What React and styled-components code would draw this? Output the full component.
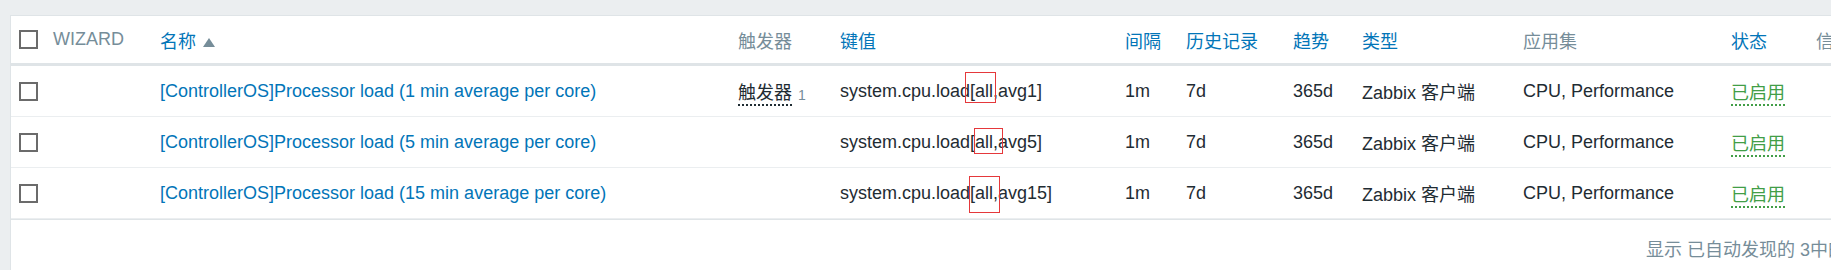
import React from "react";
import styled, { createGlobalStyle } from "styled-components";

const GlobalStyle = createGlobalStyle`
  body {
    margin: 0;
    background: #ebeef0;
    overflow: hidden;
    font-family: "Liberation Sans", Arial, "Noto Sans CJK SC", sans-serif;
    font-size: 18px;
    color: #1f2c33;
  }
`;

const Page = styled.div`
  padding: 15px 0 0 10px;
`;

const Panel = styled.div`
  width: 1880px;
  background: #ffffff;
  border: 1px solid #dfe4e7;
  border-right: none;
  border-bottom: none;
`;

const Table = styled.table`
  width: 100%;
  table-layout: fixed;
  border-collapse: collapse;
`;

const HeadCell = styled.th`
  height: 47px;
  padding: 0 8px;
  text-align: left;
  font-weight: normal;
  white-space: nowrap;
  overflow: hidden;
  color: ${(p) => (p.$sortable ? "#0275b8" : "#768d99")};
  border-bottom: 3px solid #dfe4e7;
  vertical-align: middle;
`;

const Row = styled.tr`
  border-bottom: 1px solid #ebeef0;
`;

const Cell = styled.td`
  position: relative;
  height: 50px;
  padding: 0 8px;
  white-space: nowrap;
  vertical-align: middle;
`;

const Checkbox = styled.span`
  display: block;
  box-sizing: border-box;
  width: 19px;
  height: 19px;
  border: 2px solid #6b6b6b;
  background: #fff;
`;

const SortArrow = styled.span`
  display: inline-block;
  width: 0;
  height: 0;
  margin-left: 7px;
  border-left: 6px solid transparent;
  border-right: 6px solid transparent;
  border-bottom: 9px solid #768d99;
  vertical-align: 1px;
`;

const ItemLink = styled.span`
  color: #0275b8;
`;

const DottedLink = styled.span`
  color: ${(p) => p.$color || "#1f2c33"};
  border-bottom: 2px dotted ${(p) => p.$color || "#1f2c33"};
  padding-bottom: 1px;
`;

const Sup = styled.sup`
  margin-left: 6px;
  font-size: 14px;
  color: #768d99;
  vertical-align: -1px;
`;

const Mark = styled.span`
  position: absolute;
  box-sizing: border-box;
  border: 1px solid #e5383b;
  pointer-events: none;
`;

const Footer = styled.div`
  padding: 15px 35px 0 0;
  height: 50px;
  text-align: right;
  color: #768d99;
  border-top: 1px solid #dfe4e7;
`;

const columns = [
  { w: 34 },
  { w: 107, label: "WIZARD" },
  { w: 578, label: "名称", sortable: true, arrow: true },
  { w: 102, label: "触发器" },
  { w: 285, label: "键值", sortable: true },
  { w: 61, label: "间隔", sortable: true },
  { w: 107, label: "历史记录", sortable: true },
  { w: 69, label: "趋势", sortable: true },
  { w: 161, label: "类型", sortable: true },
  { w: 208, label: "应用集" },
  { w: 85, label: "状态", sortable: true },
  { label: "信息" },
];

const items = [
  {
    name: "[ControllerOS]Processor load (1 min average per core)",
    triggers: 1,
    key: "system.cpu.load[all,avg1]",
    mark: { left: 133, top: 6, width: 31, height: 31 },
  },
  {
    name: "[ControllerOS]Processor load (5 min average per core)",
    key: "system.cpu.load[all,avg5]",
    mark: { left: 142, top: 11, width: 29, height: 26 },
  },
  {
    name: "[ControllerOS]Processor load (15 min average per core)",
    key: "system.cpu.load[all,avg15]",
    mark: { left: 137, top: 8, width: 31, height: 37 },
  },
];

export default function App() {
  return (
    <Page>
      <GlobalStyle />
      <Panel>
        <Table>
          <colgroup>
            {columns.map((c, i) => (
              <col key={i} style={c.w ? { width: c.w } : undefined} />
            ))}
          </colgroup>
          <thead>
            <tr>
              {columns.map((c, i) => (
                <HeadCell key={i} $sortable={c.sortable}>
                  {i === 0 ? <Checkbox /> : c.label}
                  {c.arrow && <SortArrow />}
                </HeadCell>
              ))}
            </tr>
          </thead>
          <tbody>
            {items.map((item) => (
              <Row key={item.key}>
                <Cell>
                  <Checkbox />
                </Cell>
                <Cell />
                <Cell>
                  <ItemLink>{item.name}</ItemLink>
                </Cell>
                <Cell>
                  {item.triggers && (
                    <>
                      <DottedLink>触发器</DottedLink>
                      <Sup>{item.triggers}</Sup>
                    </>
                  )}
                </Cell>
                <Cell>
                  {item.key}
                  <Mark
                    style={{
                      left: item.mark.left,
                      top: item.mark.top,
                      width: item.mark.width,
                      height: item.mark.height,
                    }}
                  />
                </Cell>
                <Cell>1m</Cell>
                <Cell>7d</Cell>
                <Cell>365d</Cell>
                <Cell>Zabbix 客户端</Cell>
                <Cell>CPU, Performance</Cell>
                <Cell>
                  <DottedLink $color="#429e47">已启用</DottedLink>
                </Cell>
                <Cell />
              </Row>
            ))}
          </tbody>
        </Table>
        <Footer>显示 已自动发现的 3中的3</Footer>
      </Panel>
    </Page>
  );
}
